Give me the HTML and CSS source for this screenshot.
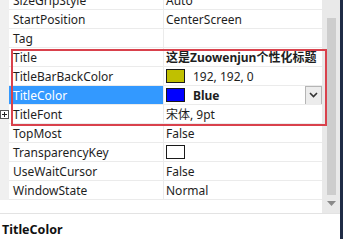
FILE: index.html
```html
<!DOCTYPE html>
<html>
<head>
<meta charset="utf-8">
<link rel="stylesheet" href="styles.css">
</head>
<body>
<div class="window">
  <div class="content">
    <div class="top">
      <div class="grid">
        <div class="row first"><div class="gut"></div><div class="name">SizeGripStyle</div><div class="val">Auto</div></div>
        <div class="row"><div class="gut"></div><div class="name">StartPosition</div><div class="val">CenterScreen</div></div>
        <div class="row"><div class="gut"></div><div class="name">Tag</div><div class="val"></div></div>
        <div class="row"><div class="gut"></div><div class="name">Title</div><div class="val bold">这是Zuowenjun个性化标题</div></div>
        <div class="row"><div class="gut"></div><div class="name">TitleBarBackColor</div><div class="val"><span class="swatch yellow"></span><span>192, 192, 0</span></div></div>
        <div class="row selected"><div class="gut"></div><div class="name">TitleColor</div><div class="val"><span class="swatch blue"></span><span class="bold">Blue</span><span class="drop"><svg width="9" height="6" viewBox="0 0 9 6"><path d="M1 1 L4.5 4.5 L8 1" fill="none" stroke="#333" stroke-width="1.6"/></svg></span></div></div>
        <div class="row"><div class="gut"><svg class="plus" width="9" height="9" viewBox="0 0 9 9"><rect x="0.5" y="0.5" width="8" height="8" fill="#fff" stroke="#555"/><path d="M2 4.5 H7 M4.5 2 V7" stroke="#222" stroke-width="1"/></svg></div><div class="name">TitleFont</div><div class="val">宋体, 9pt</div></div>
        <div class="row"><div class="gut"></div><div class="name">TopMost</div><div class="val">False</div></div>
        <div class="row"><div class="gut"></div><div class="name">TransparencyKey</div><div class="val"><span class="swatch white"></span></div></div>
        <div class="row"><div class="gut"></div><div class="name">UseWaitCursor</div><div class="val">False</div></div>
        <div class="row"><div class="gut"></div><div class="name">WindowState</div><div class="val">Normal</div></div>
      </div>
      <div class="vscroll">
        <div class="thumb"></div>
        <div class="arrow"><svg width="9" height="6" viewBox="0 0 9 6"><path d="M0 0 H9 L4.5 5 Z" fill="#8a8a8a"/></svg></div>
      </div>
    </div>
    <div class="desc">TitleColor</div>
  </div>
  <div class="edge"></div>
</div>
<div class="highlight"></div>
</body>
</html>
```
FILE: styles.css
```css
html, body {
  margin: 0;
  padding: 0;
  background: #fff;
}
body {
  width: 343px;
  height: 239px;
  overflow: hidden;
  position: relative;
  font-family: "Noto Sans", "Noto Sans CJK SC", sans-serif;
  font-size: 12px;
  color: #1e1e1e;
}
.window {
  display: flex;
  height: 239px;
}
.content {
  width: 340px;
  display: flex;
  flex-direction: column;
}
.edge {
  width: 3px;
  background: #1f2b45;
}
.top {
  display: flex;
  height: 213px;
  border-bottom: 1px solid #e3e3e3;
}
.grid {
  width: 322px;
  overflow: hidden;
}
.row {
  display: grid;
  grid-template-columns: 9px 154px 159px;
  height: 19px;
}
.row.first {
  margin-top: -9px;
}
.gut {
  background: #f0f0f0;
  position: relative;
}
.plus {
  position: absolute;
  left: 0;
  top: 5px;
}
.name, .val {
  border-bottom: 1px solid #ebebeb;
  display: flex;
  align-items: center;
  white-space: nowrap;
  overflow: hidden;
}
.name {
  padding-left: 4px;
}
.val {
  border-left: 1px solid #ebebeb;
  padding-left: 2px;
}
.bold {
  font-weight: bold;
}
.selected .name {
  background: #3399ff;
  color: #fff;
}
.swatch {
  width: 17px;
  height: 12px;
  border: 1px solid #1a1a1a;
  margin-right: 8px;
  flex: none;
}
.yellow { background: #c0c000; }
.blue { background: #0000ff; }
.white { background: #fff; }
.drop {
  margin-left: auto;
  width: 15px;
  height: 17px;
  border: 1px solid #b5b5b5;
  background: #ececec;
  display: flex;
  align-items: center;
  justify-content: center;
  margin-right: 0;
}
.vscroll {
  width: 18px;
  background: #e9e9e9;
  display: flex;
  flex-direction: column;
  align-items: center;
  padding-top: 18px;
  box-sizing: border-box;
}
.thumb {
  width: 9px;
  height: 177px;
  background: #cdcdcd;
}
.arrow {
  margin-top: 6px;
  height: 6px;
  display: flex;
}
.desc {
  font-weight: bold;
  font-size: 12.5px;
  padding: 7px 0 0 2px;
  color: #111;
}
.highlight {
  position: absolute;
  left: 11px;
  top: 49px;
  width: 312px;
  height: 73px;
  border: 2px solid #d9414c;
}
```
